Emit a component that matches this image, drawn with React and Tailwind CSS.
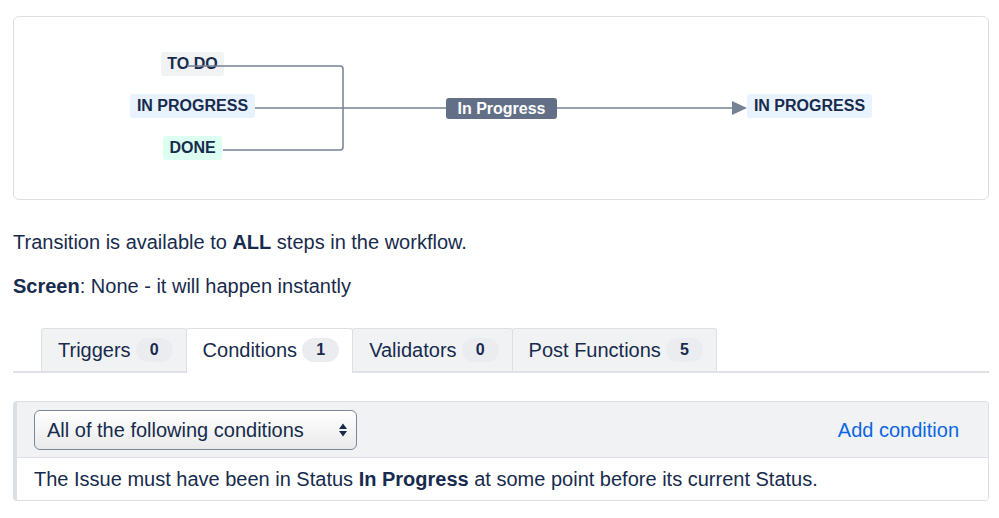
import React from "react";

const font = { fontFamily: '"Liberation Sans", Arial, sans-serif' };

function Lozenge({ children, className }) {
  return (
    <div
      className={
        "absolute h-[24px] flex items-center justify-center rounded-[3px] text-[16px] font-bold leading-none text-[#172b4d] whitespace-nowrap " +
        className
      }
    >
      {children}
    </div>
  );
}

function Diagram() {
  return (
    <div className="relative h-[184px] rounded-[6px] border border-[#dcdfe4] bg-white">
      <Lozenge className="left-[147px] top-[35px] w-[63px] bg-[#f1f2f4]">TO DO</Lozenge>
      <Lozenge className="left-[116px] top-[77px] w-[125px] bg-[#e9f2ff]">IN PROGRESS</Lozenge>
      <Lozenge className="left-[149px] top-[119px] w-[59px] bg-[#dcfff1]">DONE</Lozenge>
      <svg className="absolute left-0 top-0" width="974" height="182" viewBox="0 0 974 182">
        <g fill="none" stroke="#758195" strokeWidth="1.5">
          <path d="M173 49 H326 a3 3 0 0 1 3 3 V130 a3 3 0 0 1 -3 3 H209" />
          <path d="M241 91 H432" />
          <path d="M543 91 H720" />
        </g>
        <path d="M718 84 L733 91 L718 98 Z" fill="#758195" />
      </svg>
      <div className="absolute left-[432px] top-[81px] h-[21px] w-[111px] flex items-center justify-center rounded-[3px] bg-[#626f86] text-[16px] font-bold leading-none text-white whitespace-nowrap">
        In Progress
      </div>
      <Lozenge className="left-[733px] top-[77px] w-[125px] bg-[#e9f2ff]">IN PROGRESS</Lozenge>
    </div>
  );
}

function Badge({ n }) {
  return (
    <span className="inline-flex h-[24px] w-[37px] items-center justify-center rounded-full bg-[#ebecf0] text-[16px] font-bold text-[#172b4d]">
      {n}
    </span>
  );
}

function Tab({ label, n, active }) {
  return (
    <div
      className={
        "flex items-center gap-[5px] pl-4 pr-[13px] rounded-t-[3px] border border-b-0 border-[#dcdfe4] -ml-px first:ml-0 " +
        (active ? "bg-white relative mb-[-2px] h-[45px] pb-[2px]" : "h-[43px] bg-[#f1f2f4]")
      }
    >
      <span className="text-[20px] text-[#172b4d]">{label}</span>
      <Badge n={n} />
    </div>
  );
}

export default function App() {
  return (
    <div className="w-[999px] h-[518px] bg-white pl-[13px] pr-[10px] pt-[16px] text-[#172b4d]" style={font}>
      <Diagram />
      <p className="mt-[30px] text-[20px] leading-[24px]">
        Transition is available to <b>ALL</b> steps in the workflow.
      </p>
      <p className="mt-[20px] text-[20px] leading-[24px]">
        <b>Screen</b>: None - it will happen instantly
      </p>
      <div className="mt-[30px] flex items-end border-b-2 border-[#dfe1e6] pl-[28px]">
        <Tab label="Triggers" n={0} />
        <Tab label="Conditions" n={1} active />
        <Tab label="Validators" n={0} />
        <Tab label="Post Functions" n={5} />
      </div>
      <div className="mt-[28px] rounded-[4px] border border-l-4 border-[#dcdfe4] overflow-hidden">
        <div className="flex items-center justify-between bg-[#f1f2f4] border-b border-[#dcdfe4] pl-[17px] pr-[29px] pt-[8px] pb-[7px]">
          <div className="flex h-[40px] w-[323px] items-center justify-between rounded-[6px] border border-[#7a869a] bg-gradient-to-b from-white to-[#eaeaea] pl-[12px] pr-[8px]">
            <span className="text-[20px]">All of the following conditions</span>
            <svg width="10" height="16" viewBox="0 0 10 16">
              <path d="M1 7 L5 1.5 L9 7 Z" fill="#172b4d" />
              <path d="M1 9 L5 14.5 L9 9 Z" fill="#172b4d" />
            </svg>
          </div>
          <span className="text-[20px] text-[#0c66e4]">Add condition</span>
        </div>
        <div className="bg-white pl-[17px] h-[42px] flex items-center">
          <span className="text-[20px]">
            The Issue must have been in Status <b>In Progress</b> at some point before its current Status.
          </span>
        </div>
      </div>
    </div>
  );
}
